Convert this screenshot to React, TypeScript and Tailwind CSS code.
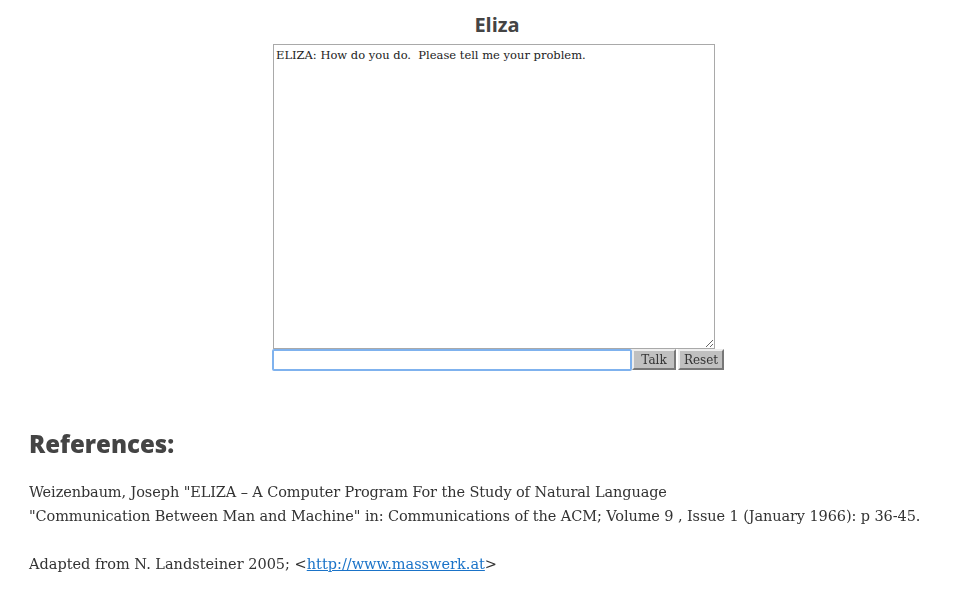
import React from 'react';

const serif = "font-['DejaVu_Serif','Liberation_Serif',serif]";

const App: React.FC = () => {
  return (
    <div className="min-h-[591px] bg-white text-[#333]">
      <div className="flex flex-col items-center pl-[40px] pt-[14px]">
        <h1 className="font-['Open_Sans',sans-serif] text-[20px] leading-[22px] font-bold text-[#444]">Eliza</h1>
        <div className="mt-[8px] ml-[3px] flex flex-col items-start">
          <textarea
            readOnly
            className={`${serif} block h-[305px] w-[442px] resize border border-[#a9a9a9] px-[2px] py-[2px] text-[11.5px] leading-[16px] text-[#222] outline-none`}
            defaultValue={'ELIZA: How do you do.  Please tell me your problem.'}
          />
          <div className="ml-[-1px] flex items-start">
            <input
              autoFocus
              type="text"
              className="h-[22px] w-[360px] rounded-[2px] border-2 border-[#7fb2ee] bg-white px-[2px] text-[13px] outline-none"
            />
            <button className={`${serif} h-[21px] w-[44px] border-2 border-t-[#eee] border-l-[#eee] border-b-[#777] border-r-[#777] bg-[#c0c0c0] text-[12px] text-[#333]`}>Talk</button>
            <button className={`${serif} ml-[2px] h-[21px] w-[46px] border-2 border-t-[#eee] border-l-[#eee] border-b-[#777] border-r-[#777] bg-[#c0c0c0] text-[12px] text-[#333]`}>Reset</button>
          </div>
        </div>
      </div>
      <div className="px-[29px] pt-[57px]">
        <h2 className="font-['Open_Sans',sans-serif] text-[24px] leading-[32px] font-extrabold text-[#444]">References:</h2>
        <p className={`${serif} mt-[20px] whitespace-nowrap text-[14.5px] leading-[24px] tracking-[-0.1px] text-[#333]`}>
          Weizenbaum, Joseph "ELIZA – A Computer Program For the Study of Natural Language
          <br />
          "Communication Between Man and Machine" in: Communications of the ACM; Volume 9 , Issue 1 (January 1966): p 36-45.
        </p>
        <p className={`${serif} mt-[24px] text-[14.5px] leading-[24px] text-[#333]`}>
          Adapted from N. Landsteiner 2005; &lt;<a href="#" className="text-[#1a73c8] underline">http://www.masswerk.at</a>&gt;
        </p>
      </div>
    </div>
  );
};

export default App;
